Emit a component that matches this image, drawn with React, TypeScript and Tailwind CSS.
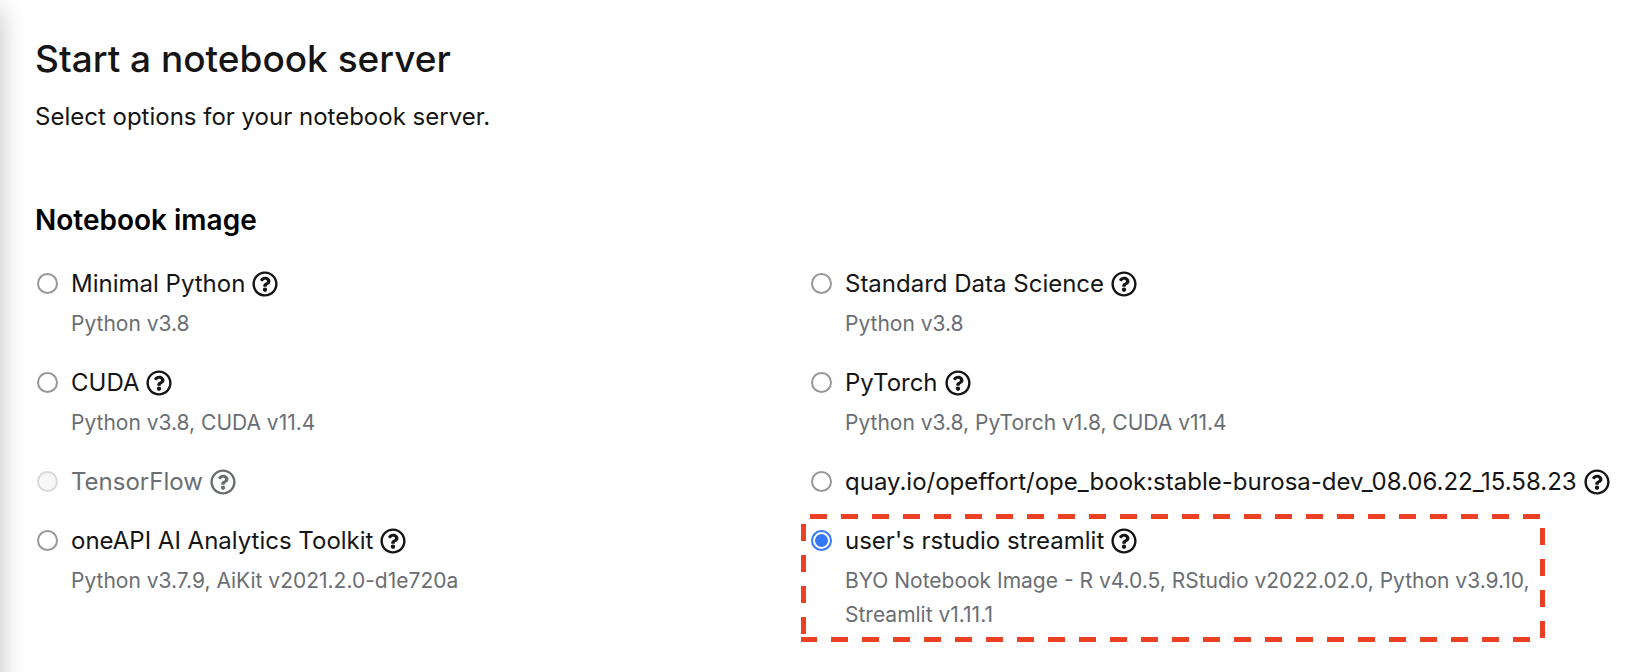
import { useState } from "react";
import { FaRegQuestionCircle } from "react-icons/fa";

type NotebookImage = {
  id: string;
  name: string;
  description?: string;
  disabled?: boolean;
  highlighted?: boolean;
};

const images: NotebookImage[] = [
  { id: "minimal", name: "Minimal Python", description: "Python v3.8" },
  { id: "standard", name: "Standard Data Science", description: "Python v3.8" },
  { id: "cuda", name: "CUDA", description: "Python v3.8, CUDA v11.4" },
  { id: "pytorch", name: "PyTorch", description: "Python v3.8, PyTorch v1.8, CUDA v11.4" },
  { id: "tensorflow", name: "TensorFlow", disabled: true },
  { id: "ope", name: "quay.io/opeffort/ope_book:stable-burosa-dev_08.06.22_15.58.23" },
  { id: "oneapi", name: "oneAPI AI Analytics Toolkit", description: "Python v3.7.9, AiKit v2021.2.0-d1e720a" },
  {
    id: "rstudio",
    name: "user's rstudio streamlit",
    description: "BYO Notebook Image - R v4.0.5, RStudio v2022.02.0, Python v3.9.10, Streamlit v1.11.1",
    highlighted: true,
  },
];

function DashedHighlight() {
  return (
    <svg
      className="pointer-events-none absolute -top-[7px] -left-[10px] h-[128px] w-[744px]"
      viewBox="0 0 744 128"
      fill="none"
      stroke="#ec4024"
      strokeWidth="5"
      strokeDasharray="17 14"
      aria-hidden="true"
    >
      <path d="M9 2.5H739" />
      <path d="M741.5 14V124" />
      <path d="M729 125.5H0" />
      <path d="M2.5 10V120" />
    </svg>
  );
}

function ImageOption({
  image,
  checked,
  onSelect,
}: {
  image: NotebookImage;
  checked: boolean;
  onSelect: () => void;
}) {
  return (
    <div className="relative flex min-w-0 gap-[13px]">
      <input
        type="radio"
        id={image.id}
        name="notebook-image"
        checked={checked}
        disabled={image.disabled}
        onChange={onSelect}
        className="mt-[9px] size-[21px] shrink-0 appearance-none rounded-full border-2 border-[#979797] bg-white bg-clip-content p-[2px] checked:border-[#3478f6] checked:bg-[#3478f6] disabled:border-[#d9d9d9] disabled:bg-[#f7f7f7] disabled:bg-clip-border"
      />
      <div className="min-w-0">
        <div className={image.disabled ? "flex h-[39px] items-center gap-[7px] text-[#6a6e73]" : "flex h-[39px] items-center gap-[7px] text-[#151515]"}>
          <label htmlFor={image.id} className="text-[24px] leading-[39px] whitespace-nowrap">
            {image.name}
          </label>
          <button type="button" aria-label={`More info for ${image.name}`} className="shrink-0">
            <FaRegQuestionCircle className="size-[26px]" />
          </button>
        </div>
        {image.description && (
          <p className="mt-1 mb-[2px] text-[21px] leading-[34px] text-[#6a6e73]">{image.description}</p>
        )}
      </div>
      {image.highlighted && <DashedHighlight />}
    </div>
  );
}

export default function App() {
  const [selected, setSelected] = useState("rstudio");

  return (
    <div className="flex min-h-screen overflow-hidden bg-white font-['Inter',sans-serif] text-[#151515]">
      <div className="-mb-10 -ml-20 w-20 shrink-0 shadow-[0_10px_26px_0_rgba(3,3,3,0.25)]" />
      <main className="min-w-0 flex-1 pt-9 pr-[49px] pl-[35px]">
        <h1 className="text-[37px] leading-[46px] font-medium">Start a notebook server</h1>
        <p className="mt-[15px] text-[24px] leading-[40px]">Select options for your notebook server.</p>
        <fieldset className="mt-[63px]">
          <legend className="text-[28px] leading-[40px] font-semibold text-black">Notebook image</legend>
          <div className="mt-6 grid grid-cols-2 gap-y-5 pl-[2px]">
            {images.map((image) => (
              <ImageOption
                key={image.id}
                image={image}
                checked={selected === image.id}
                onSelect={() => setSelected(image.id)}
              />
            ))}
          </div>
        </fieldset>
      </main>
    </div>
  );
}
